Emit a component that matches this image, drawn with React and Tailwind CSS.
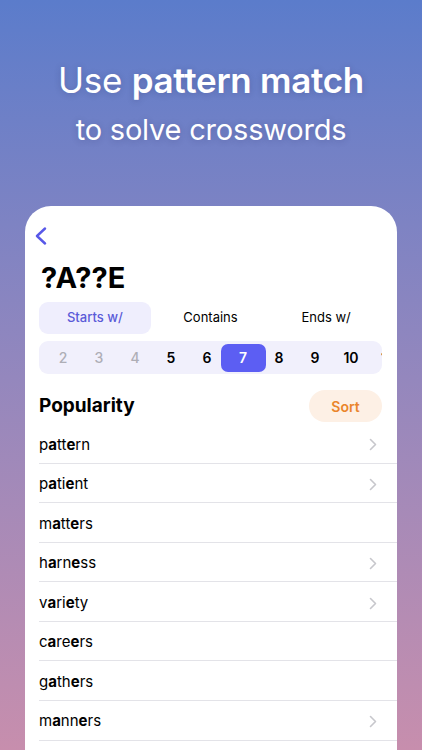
import React from 'react';

const words = [
  { w: 'pattern', arrow: true },
  { w: 'patient', arrow: true },
  { w: 'matters', arrow: false },
  { w: 'harness', arrow: true },
  { w: 'variety', arrow: true },
  { w: 'careers', arrow: false },
  { w: 'gathers', arrow: false },
  { w: 'manners', arrow: true },
];

const lengths = [2, 3, 4, 5, 6, 7, 8, 9, 10, 11];

// letters 2 and 5 of the pattern ?A??E are highlighted
function Word({ text }) {
  return (
    <span>
      {text.split('').map((ch, i) =>
        i === 1 || i === 4 ? (
          <span key={i} className="font-bold">{ch}</span>
        ) : (
          <span key={i}>{ch}</span>
        )
      )}
    </span>
  );
}

function Chevron() {
  return (
    <svg width="8" height="13" viewBox="0 0 8 13" fill="none">
      <path d="M1.5 1.5 L6.5 6.5 L1.5 11.5" stroke="#c7c7cc" strokeWidth="1.6" strokeLinecap="round" strokeLinejoin="round" />
    </svg>
  );
}

export default function App() {
  return (
    <div
      className="h-[750px] w-full overflow-hidden flex flex-col bg-gradient-to-b from-[#5b7ccb] to-[#c78ead]"
      style={{ fontFamily: 'Inter, "Noto Sans", sans-serif' }}
    >
      {/* Headline */}
      <div className="pt-[59px] flex flex-col items-center text-white [text-shadow:0_1px_6px_rgba(40,40,90,0.25)]">
        <div className="text-[35px] leading-[42px] font-normal tracking-[-0.3px]">
          Use <span className="font-semibold">pattern match</span>
        </div>
        <div className="mt-[11px] text-[29px] leading-[36px] font-normal tracking-[-0.2px]">to solve crosswords</div>
      </div>

      {/* Card */}
      <div className="mt-[58px] mx-[25px] flex-1 bg-white rounded-t-[26px] pl-[14px] pt-[21px] overflow-hidden">
        <div className="pr-[15px]">
          <svg className="-ml-[5px]" width="14" height="18" viewBox="0 0 14 18" fill="none">
            <path d="M11 1.5 L3 9 L11 16.5" stroke="#5858e8" strokeWidth="2.4" strokeLinecap="round" strokeLinejoin="round" />
          </svg>

          <div className="mt-[16px] text-[29px] leading-[34px] font-bold text-black pl-[2px]">?A??E</div>

          {/* Tabs */}
          <div className="mt-[7px] grid grid-cols-3 gap-[4px] text-[13px]">
            <div className="h-[32px] rounded-[9px] bg-[#efeefd] flex items-center justify-center text-[#5a5ad8] font-medium">
              Starts w/
            </div>
            <div className="h-[32px] flex items-center justify-center text-black">Contains</div>
            <div className="h-[32px] flex items-center justify-center text-black">Ends w/</div>
          </div>

          {/* Word length selector */}
          <div className="mt-[7px] h-[33px] rounded-[9px] bg-[#f1f0fc] flex items-center pl-[6px] overflow-hidden text-[14px] font-semibold">
            {lengths.map((n) =>
              n === 7 ? (
                <div key={n} className="shrink-0 w-[45px] -mx-[4.5px] h-[28px] rounded-[7px] bg-[#5c5ef3] text-white flex items-center justify-center">
                  {n}
                </div>
              ) : (
                <div
                  key={n}
                  className={
                    'shrink-0 w-[36px] flex items-center justify-center ' +
                    (n < 5 ? 'text-[#aeaeb6] font-medium' : 'text-black')
                  }
                >
                  {n}
                </div>
              )
            )}
          </div>

          {/* Sort header */}
          <div className="mt-[16px] flex items-center justify-between">
            <div className="text-[19px] font-bold text-black">Popularity</div>
            <div className="h-[32px] w-[73px] rounded-full bg-[#fdf0e5] text-[#ea852b] text-[14px] font-semibold flex items-center justify-center">
              Sort
            </div>
          </div>
        </div>

        {/* Results */}
        <div className="mt-[2px]">
          {words.map((item) => (
            <div
              key={item.w}
              className="h-[39.57px] pt-[3px] border-b border-[#e3e3e8] flex items-center justify-between pr-[20px] text-[15px] text-black"
            >
              <Word text={item.w} />
              {item.arrow && <Chevron />}
            </div>
          ))}
        </div>
      </div>
    </div>
  );
}
